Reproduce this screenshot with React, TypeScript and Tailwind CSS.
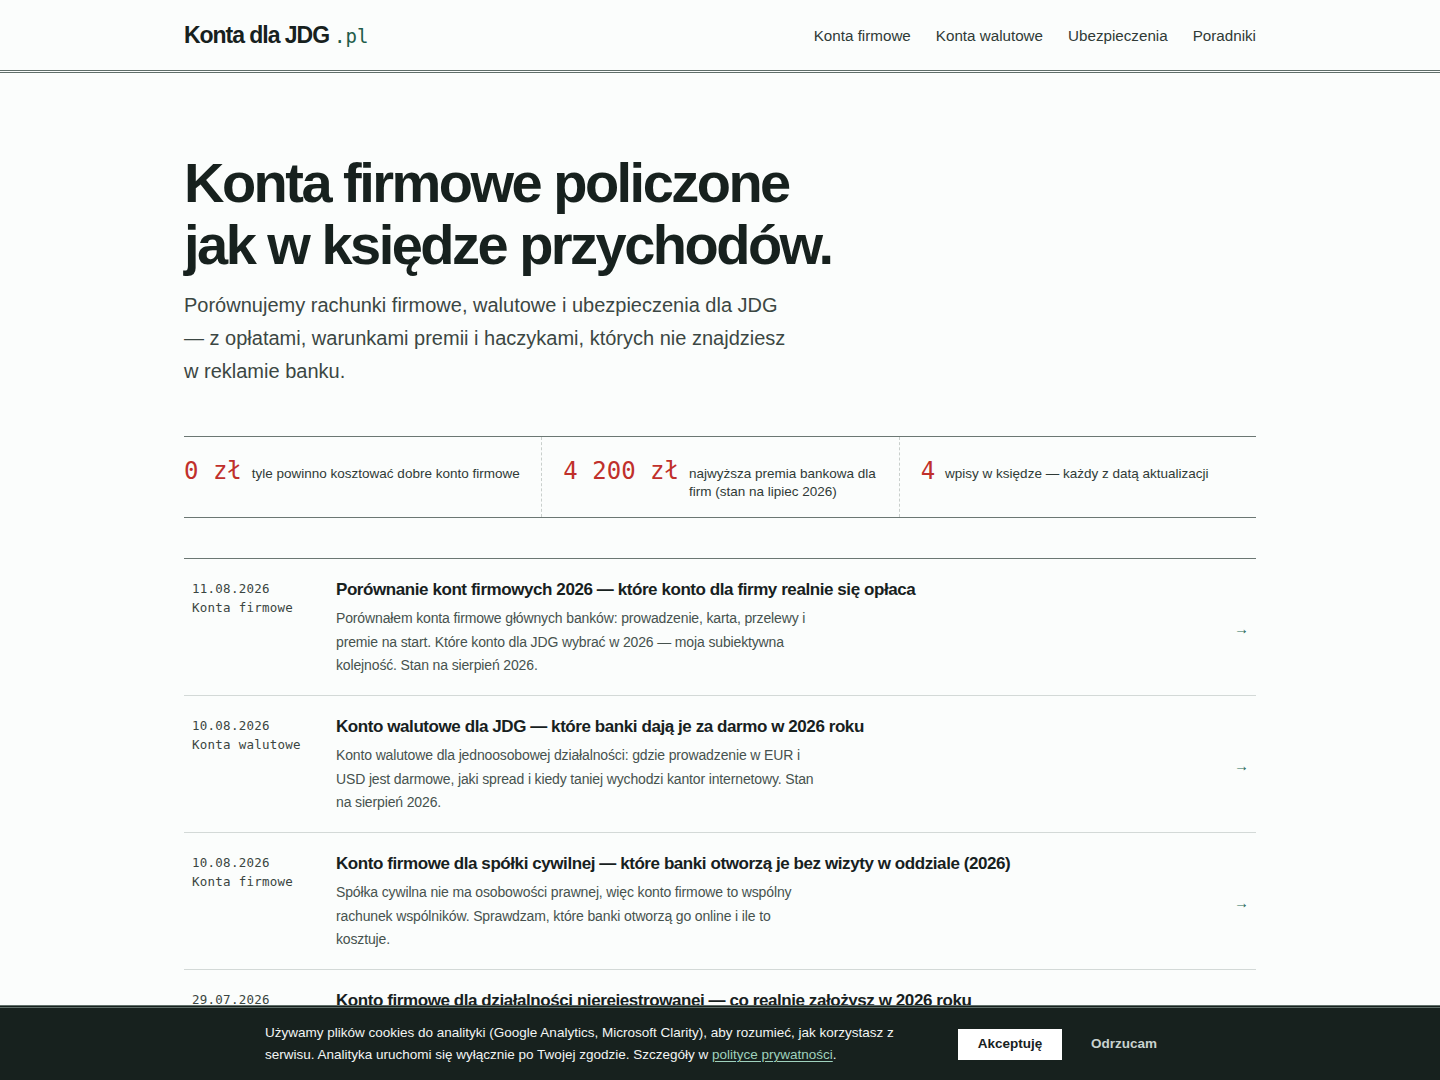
import React from 'react';

const sans = { fontFamily: '"Liberation Sans", Arial, sans-serif' };
const mono = { fontFamily: '"DejaVu Sans Mono", "Liberation Mono", monospace' };

const stats = [
  { value: '0 zł', text: 'tyle powinno kosztować dobre konto firmowe' },
  { value: '4 200 zł', text: 'najwyższa premia bankowa dla firm (stan na lipiec 2026)' },
  { value: '4', text: 'wpisy w księdze — każdy z datą aktualizacji' },
];

const posts = [
  {
    date: '11.08.2026',
    cat: 'Konta firmowe',
    title: 'Porównanie kont firmowych 2026 — które konto dla firmy realnie się opłaca',
    desc: 'Porównałem konta firmowe głównych banków: prowadzenie, karta, przelewy i premie na start. Które konto dla JDG wybrać w 2026 — moja subiektywna kolejność. Stan na sierpień 2026.',
  },
  {
    date: '10.08.2026',
    cat: 'Konta walutowe',
    title: 'Konto walutowe dla JDG — które banki dają je za darmo w 2026 roku',
    desc: 'Konto walutowe dla jednoosobowej działalności: gdzie prowadzenie w EUR i USD jest darmowe, jaki spread i kiedy taniej wychodzi kantor internetowy. Stan na sierpień 2026.',
  },
  {
    date: '10.08.2026',
    cat: 'Konta firmowe',
    title: 'Konto firmowe dla spółki cywilnej — które banki otworzą je bez wizyty w oddziale (2026)',
    desc: 'Spółka cywilna nie ma osobowości prawnej, więc konto firmowe to wspólny rachunek wspólników. Sprawdzam, które banki otworzą go online i ile to kosztuje.',
  },
  {
    date: '29.07.2026',
    cat: 'Poradniki',
    title: 'Konto firmowe dla działalności nierejestrowanej — co realnie założysz w 2026 roku',
    desc: 'Działalność nierejestrowana nie ma NIP-u ani wpisu do CEIDG, więc klasyczne konto firmowe nie zawsze jest dostępne. Sprawdzam, jakie są opcje.',
  },
];

export default function App() {
  return (
    <div className="min-h-screen bg-[#fbfdfc] text-[#17211e]" style={sans}>
      <header className="border-b-[3px] border-double border-[#5f6e69]">
        <div className="mx-auto flex h-[70px] w-[1072px] items-center justify-between">
          <a className="flex items-baseline text-[23px] font-bold tracking-[-0.045em] text-[#17211e]">
            Konta dla JDG
            <span className="ml-[5px] text-[19px] font-normal tracking-normal text-[#1f5c4a]" style={mono}>.pl</span>
          </a>
          <nav className="flex gap-[25px] pt-[2px] text-[15.2px] text-[#2f3a36]">
            <a>Konta firmowe</a>
            <a>Konta walutowe</a>
            <a>Ubezpieczenia</a>
            <a>Poradniki</a>
          </nav>
        </div>
      </header>

      <main className="mx-auto w-[1072px] pb-[120px]">
        <section className="pt-[79px]">
          <h1 className="text-[56px] font-bold leading-[62px] tracking-[-0.045em] text-[#17211e]">
            Konta firmowe policzone
            <br />
            jak w księdze przychodów.
          </h1>
          <p className="mt-[13px] w-[610px] text-[20px] leading-[33px] text-[#3b4743]">
            Porównujemy rachunki firmowe, walutowe i ubezpieczenia dla JDG — z opłatami, warunkami premii i haczykami, których nie znajdziesz w reklamie banku.
          </p>
        </section>

        <section className="mt-[48px] grid grid-cols-3 border-y border-[#6b7773]">
          {stats.map((s, i) => (
            <div
              key={i}
              className={`flex items-start gap-[10px] pt-[20px] pb-[16px] ${i === 0 ? 'pr-[20px]' : 'pl-[21px] pr-[20px] border-l border-dashed border-[#c9cfcc]'}`}
            >
              <span className="whitespace-nowrap text-[24px] leading-[28px] text-[#c0302b]" style={mono}>
                {s.value}
              </span>
              <span className="pt-[8px] text-[13.5px] leading-[18px] text-[#2f3a36]">{s.text}</span>
            </div>
          ))}
        </section>

        <section className="mt-[40px] border-t border-[#6b7773]">
          {posts.map((p, i) => (
            <article key={i} className="flex h-[137px] items-start border-b border-[#d3d9d7] pt-[20px]">
              <div className="w-[152px] pl-[8px] text-[12.5px] leading-[19px] tracking-[0.02em] text-[#3a4541]" style={mono}>
                <div>{p.date}</div>
                <div>{p.cat}</div>
              </div>
              <div className="flex-1">
                <h2 className="text-[17px] font-bold leading-[22px] tracking-[-0.025em] text-[#17211e]">{p.title}</h2>
                <p className="mt-[6px] w-[490px] text-[14px] leading-[23.5px] tracking-[-0.01em] text-[#46524e]">{p.desc}</p>
              </div>
              <div className="mt-[40px] pr-[7px] text-[15px] leading-[20px] text-[#2a6b5a]">→</div>
            </article>
          ))}
        </section>
      </main>

      <div className="fixed inset-x-0 bottom-0 border-t-[3px] border-double border-[#5f6e69] bg-[#17211e]">
        <div className="mx-auto flex h-[72px] w-[910px] items-center justify-between">
          <p className="w-[630px] text-[13.5px] leading-[22px] text-[#f2f5f4]">
            Używamy plików cookies do analityki (Google Analytics, Microsoft Clarity), aby rozumieć, jak korzystasz z serwisu. Analityka uruchomi się wyłącznie po Twojej zgodzie. Szczegóły w <a className="text-[#9fd1bd] underline underline-offset-2">polityce prywatności</a>.
          </p>
          <div className="flex items-center gap-[11px]">
            <button className="h-[31px] w-[104px] bg-white text-[13.5px] font-bold text-[#17211e]">Akceptuję</button>
            <button className="h-[31px] px-[18px] text-[13.5px] font-bold text-[#c9d2cf]">Odrzucam</button>
          </div>
        </div>
      </div>
    </div>
  );
}
